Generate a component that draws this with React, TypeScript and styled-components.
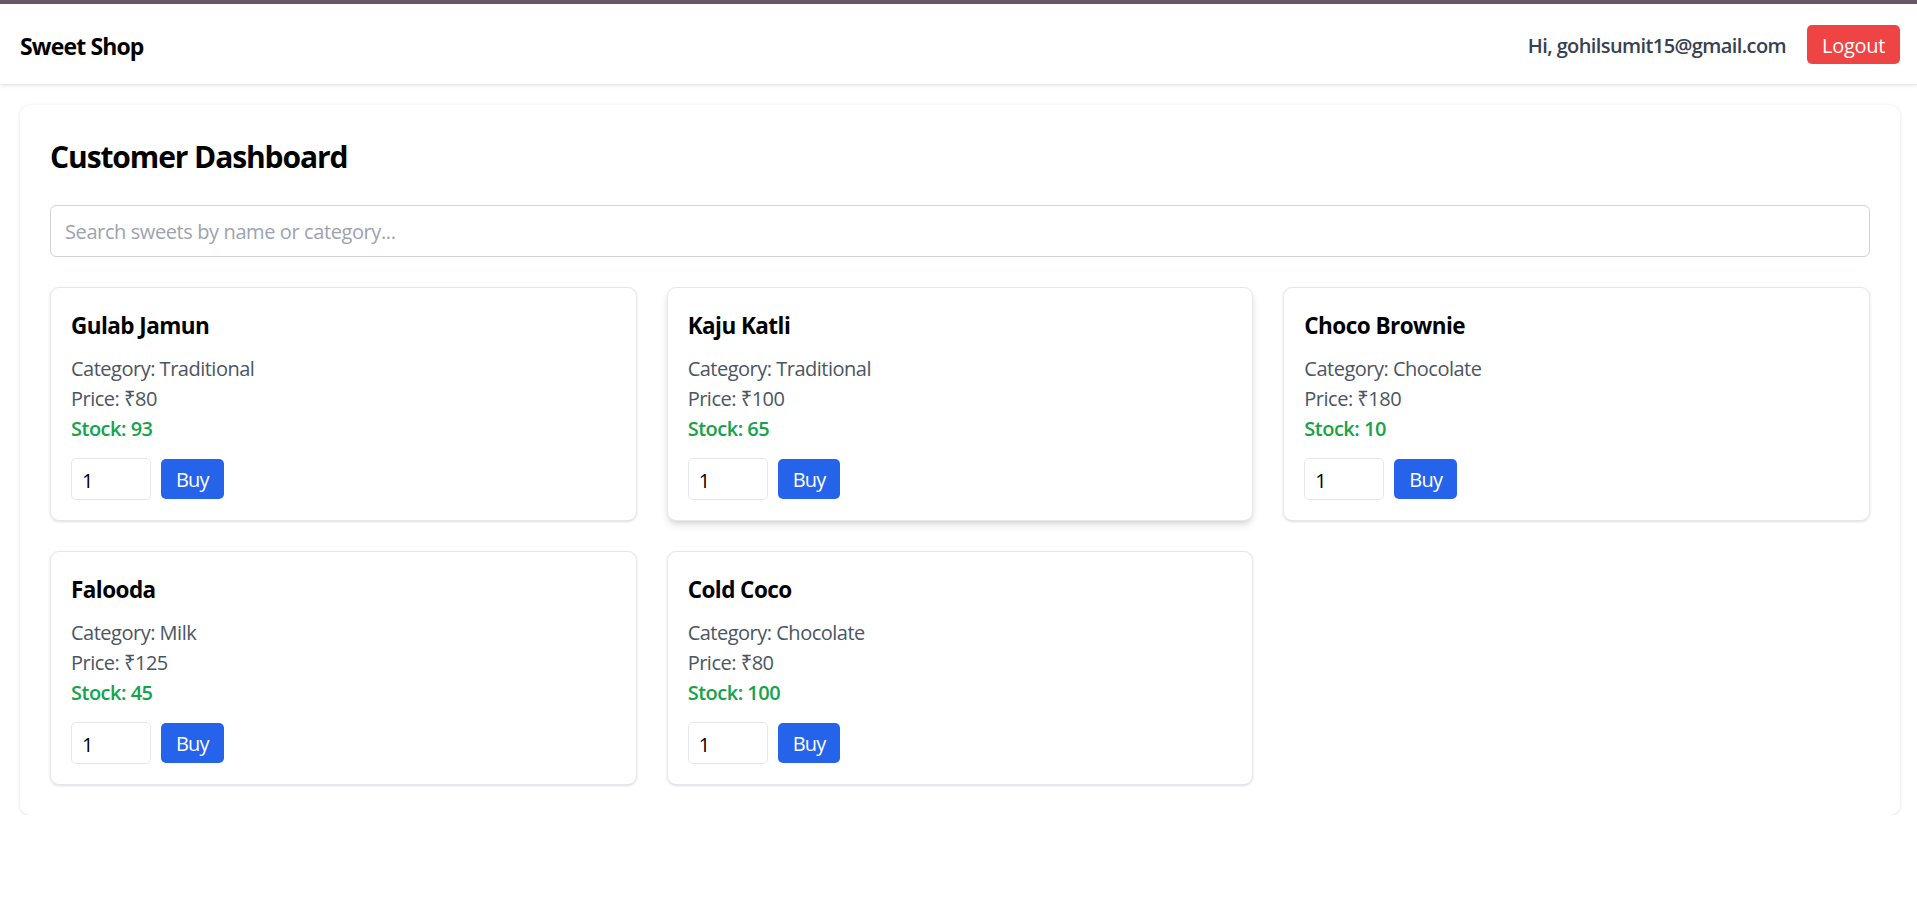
import React from "react";
import styled, { createGlobalStyle } from "styled-components";

const Global = createGlobalStyle`
  * { box-sizing: border-box; }
  html, body { margin: 0; padding: 0; background: #ffffff; }
  body { font-family: "Open Sans", "Noto Sans", sans-serif; color: #111827; }
`;

const TopStrip = styled.div`
  height: 4px;
  background: #675863;
`;

const Nav = styled.header`
  height: 80px;
  display: flex;
  align-items: center;
  justify-content: space-between;
  padding: 1px 17px 0 20px;
  background: #fff;
  box-shadow: 0 2px 4px rgba(0, 0, 0, 0.08), 0 1px 2px rgba(0, 0, 0, 0.05);
  position: relative;
  z-index: 1;
`;

const Brand = styled.div`
  font-size: 23px;
  font-weight: 700;
  color: #000;
  letter-spacing: -0.85px;
  padding-top: 2px;
`;

const UserArea = styled.div`
  display: flex;
  align-items: center;
  gap: 21px;
`;

const Greeting = styled.span`
  font-size: 20px;
  font-weight: 600;
  color: #374151;
  letter-spacing: -0.6px;
  padding-top: 2px;
`;

const Button = styled.button<{ $tone: "red" | "blue" }>`
  border: none;
  border-radius: 5px;
  font-family: inherit;
  font-size: 20px;
  line-height: 30px;
  height: ${(p) => (p.$tone === "red" ? "39px" : "40px")};
  padding: 2px 15px 0;
  color: #fff;
  cursor: pointer;
  letter-spacing: ${(p) => (p.$tone === "red" ? "-0.3px" : "-0.8px")};
  background: ${(p) => (p.$tone === "red" ? "#ef4444" : "#2563eb")};
`;

const Main = styled.main`
  margin: 21px 17px 0 20px;
`;

const Panel = styled.section`
  background: #fff;
  border-radius: 10px;
  padding: 30px;
  box-shadow: 0 1px 4px rgba(0, 0, 0, 0.1), 0 0 1px rgba(0, 0, 0, 0.06);
`;

const Title = styled.h1`
  margin: 0 0 28px;
  padding-top: 2px;
  font-size: 30px;
  line-height: 40px;
  font-weight: 700;
  color: #000;
  letter-spacing: -1.1px;
`;

const Search = styled.input`
  display: block;
  width: 100%;
  height: 52px;
  padding: 1px 14px 0;
  border: 1px solid #d1d5db;
  border-radius: 6px;
  font-family: inherit;
  font-size: 20px;
  margin-bottom: 30px;
  outline: none;
  letter-spacing: -0.4px;
  &::placeholder { color: #9ca3af; }
`;

const Grid = styled.div`
  display: grid;
  grid-template-columns: repeat(3, 1fr);
  gap: 30px;
`;

const Card = styled.article<{ $raised?: boolean }>`
  border: 1px solid #e5e7eb;
  border-radius: 9px;
  padding: 20px;
  background: #fff;
  box-shadow: ${(p) =>
    p.$raised
      ? "0 5px 8px -1px rgba(0,0,0,0.12), 0 2px 5px -2px rgba(0,0,0,0.1)"
      : "0 1px 3px rgba(0,0,0,0.1), 0 1px 2px -1px rgba(0,0,0,0.08)"};
`;

const Name = styled.h2`
  margin: 0 0 10px;
  font-size: 22.5px;
  line-height: 35px;
  font-weight: 700;
  color: #000;
  letter-spacing: -0.55px;
`;

const Info = styled.p<{ $stock?: boolean }>`
  margin: 0;
  padding-top: 1px;
  height: 30px;
  font-size: 20px;
  line-height: 30px;
  letter-spacing: -0.5px;
  color: ${(p) => (p.$stock ? "#16a34a" : "#4b5563")};
  font-weight: ${(p) => (p.$stock ? 600 : 400)};
`;

const BuyRow = styled.div`
  display: flex;
  align-items: center;
  gap: 10px;
  margin-top: 15px;
`;

const Qty = styled.input`
  width: 80px;
  height: 42px;
  border: 1px solid #e5e7eb;
  border-radius: 5px;
  padding: 2px 10px 0;
  font-family: inherit;
  font-size: 20px;
  color: #000;
  outline: none;
`;

const sweets = [
  { name: "Gulab Jamun", category: "Traditional", price: 80, stock: 93 },
  { name: "Kaju Katli", category: "Traditional", price: 100, stock: 65, raised: true },
  { name: "Choco Brownie", category: "Chocolate", price: 180, stock: 10 },
  { name: "Falooda", category: "Milk", price: 125, stock: 45 },
  { name: "Cold Coco", category: "Chocolate", price: 80, stock: 100 },
];

export default function App() {
  return (
    <>
      <Global />
      <TopStrip />
      <Nav>
        <Brand>Sweet Shop</Brand>
        <UserArea>
          <Greeting>Hi, gohilsumit15@gmail.com</Greeting>
          <Button $tone="red">Logout</Button>
        </UserArea>
      </Nav>
      <Main>
        <Panel>
          <Title>Customer Dashboard</Title>
          <Search placeholder="Search sweets by name or category..." />
          <Grid>
            {sweets.map((s) => (
              <Card key={s.name} $raised={s.raised}>
                <Name>{s.name}</Name>
                <Info>Category: {s.category}</Info>
                <Info>Price: ₹{s.price}</Info>
                <Info $stock>Stock: {s.stock}</Info>
                <BuyRow>
                  <Qty type="text" defaultValue="1" />
                  <Button $tone="blue">Buy</Button>
                </BuyRow>
              </Card>
            ))}
          </Grid>
        </Panel>
      </Main>
    </>
  );
}
